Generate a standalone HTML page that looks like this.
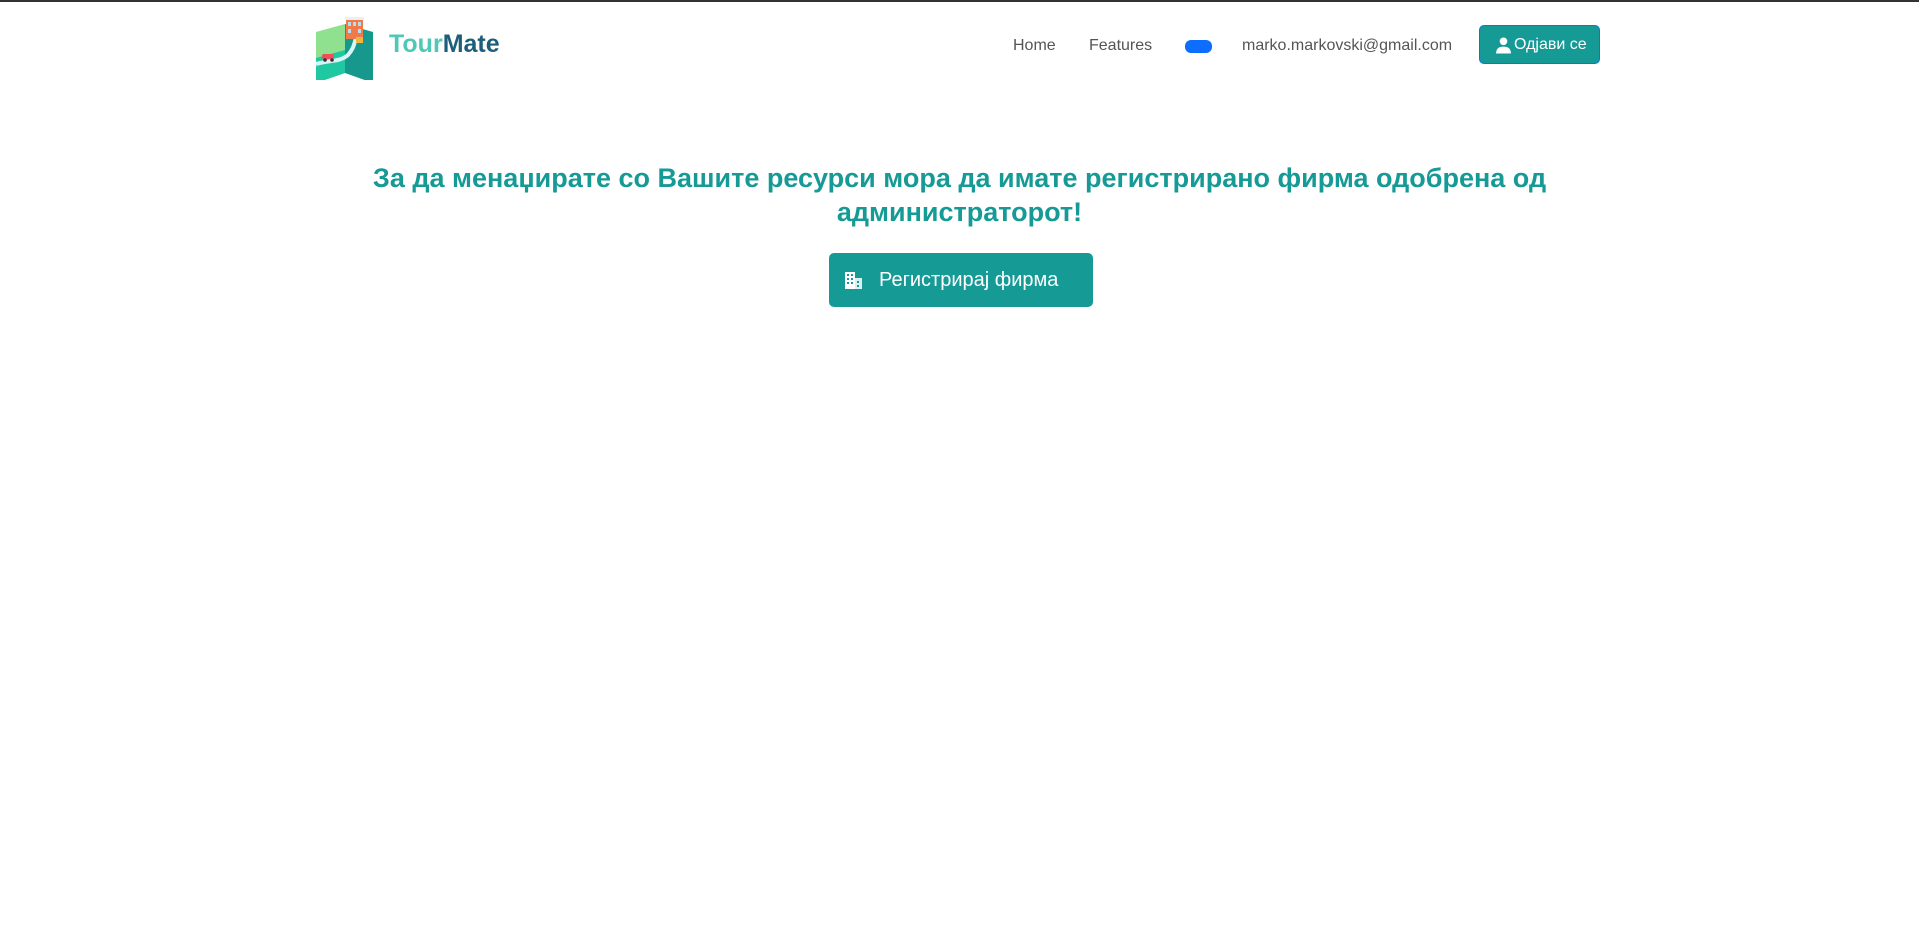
<!DOCTYPE html>
<html><head><meta charset="utf-8"><style>
html,body{margin:0;padding:0;width:1919px;height:952px;background:#fff;overflow:hidden;font-family:"Liberation Sans","DejaVu Sans",sans-serif}
.topbar{position:absolute;left:0;top:0;width:1919px;height:2px;background:#333}
.abs{position:absolute;white-space:nowrap}
.nav{font-size:16px;color:#555;top:37px}
.brand{left:389px;top:30px;font-size:25px;font-weight:bold;color:#1d5f7a}
.brand span{color:#4fc8b6}
.pill{left:1185px;top:40px;width:27px;height:13px;background:#0d6efd;border-radius:6px}
.lbtn{left:1479px;top:25px;width:121px;height:39px;background:#159a96;border:1px solid #0d6efd;border-radius:5px;color:#fff;font-size:16px;box-sizing:border-box}
h1{position:absolute;left:0;width:1919px;top:161px;margin:0;text-align:center;font-size:27px;font-weight:bold;color:#159a96;line-height:34px}
.rbtn{left:829px;top:253px;width:264px;height:54px;background:#159a96;border-radius:5px;color:#fff;font-size:20px}
</style></head><body>
<div class="topbar"></div>
<svg class="abs" style="left:310px;top:10px" width="70" height="70" viewBox="0 0 70 70">
<polygon points="6,22 35,14 35,63 6,73" fill="#8fe08f"/>
<polygon points="6,48 35,40 35,63 6,73" fill="#1fc8a0"/>
<polygon points="35,14 63,22 63,73 35,63" fill="#16998c"/>
<path d="M6,54 C20,50 30,52 38,45 C44,38 44,34 46,28" stroke="#d8f4f4" stroke-width="4" fill="none"/>
<rect x="36" y="9" width="17" height="20" fill="#f07a4a"/>
<rect x="35" y="7" width="19" height="3" fill="#eee"/>
<rect x="38" y="12" width="3" height="4" fill="#bde"/><rect x="43" y="12" width="3" height="4" fill="#bde"/><rect x="48" y="12" width="3" height="4" fill="#bde"/>
<rect x="38" y="19" width="3" height="4" fill="#bde"/><rect x="48" y="19" width="3" height="4" fill="#bde"/>
<rect x="46" y="27" width="7" height="6" fill="#f2b640"/>
<rect x="12" y="44" width="12" height="5" rx="2" fill="#f04e5a"/>
<circle cx="15" cy="50" r="1.8" fill="#333"/><circle cx="22" cy="50" r="1.8" fill="#333"/>
</svg>
<div class="abs brand"><span>Tour</span>Mate</div>
<div class="abs nav" style="left:1013px">Home</div>
<div class="abs nav" style="left:1089px">Features</div>
<div class="abs pill"></div>
<div class="abs nav" style="left:1242px">marko.markovski@gmail.com</div>
<div class="abs lbtn">
<svg class="abs" style="left:15px;top:10px" width="17" height="18" viewBox="0 0 16 16"><circle cx="8" cy="4.5" r="3.6" fill="#fff"/><path d="M1,16 C1,11 4,9.5 8,9.5 C12,9.5 15,11 15,16Z" fill="#fff"/></svg>
<span class="abs" style="left:34px;top:10px">Одјави се</span></div>
<h1>За да менаџирате со Вашите ресурси мора да имате регистрирано фирма одобрена од<br>администраторот!</h1>
<div class="abs rbtn">
<svg class="abs" style="left:15px;top:18px" width="19" height="19" viewBox="0 0 19 19"><rect x="1" y="1" width="10" height="17" fill="#fff"/><rect x="11" y="7" width="7" height="11" fill="#fff" opacity=".85"/><g fill="#159a96"><rect x="3" y="3" width="2" height="2"/><rect x="7" y="3" width="2" height="2"/><rect x="3" y="7" width="2" height="2"/><rect x="7" y="7" width="2" height="2"/><rect x="3" y="11" width="2" height="2"/><rect x="7" y="11" width="2" height="2"/><rect x="13" y="10" width="2" height="2"/><rect x="13" y="14" width="2" height="2"/></g></svg>
<span class="abs" style="left:50px;top:16px">Регистрирај фирма</span></div>
</body></html>
